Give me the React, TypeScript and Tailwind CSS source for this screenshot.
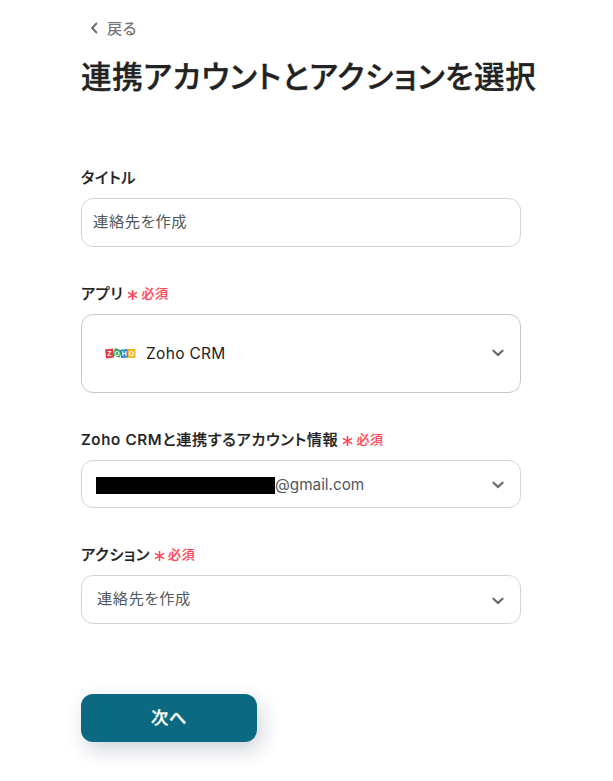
import type { ReactNode } from 'react'

const text = 'text-[#50575d]'

function Chevron({ className = '' }: { className?: string }) {
  return (
    <svg width="14" height="8" viewBox="0 0 14 8" fill="none" className={`shrink-0 ${className}`}>
      <path d="M2.4 1.7 7 5.9 11.6 1.7" stroke="#6c6c6c" strokeWidth="2.2" strokeLinecap="round" />
    </svg>
  )
}

function ZohoLogo() {
  return (
    <svg width="32" height="12" viewBox="0 0 32 12" fontFamily="Liberation Sans, sans-serif" fontSize="7" fontWeight="700" fill="#fff" textAnchor="middle" className="mb-px [font-feature-settings:normal] tracking-normal">
      <rect x="0.5" y="2" width="8" height="9" fill="#e13a3e" transform="rotate(-6 4.5 6)" />
      <text x="4.5" y="9">Z</text>
      <rect x="8.5" y="2" width="7.5" height="7.5" fill="#36a852" transform="rotate(22 12 6)" />
      <text x="12" y="8.6">O</text>
      <rect x="15.5" y="2.4" width="7.5" height="8.4" fill="#2d83c5" transform="rotate(-5 19 6)" />
      <text x="19.2" y="9">H</text>
      <rect x="22.7" y="2" width="7.8" height="8.8" fill="#f2b51d" />
      <text x="26.6" y="8.8">O</text>
    </svg>
  )
}

function Label({ children, required }: { children: ReactNode; required?: boolean }) {
  return (
    <div className="flex h-5 items-center text-[15.2px] leading-5 font-medium whitespace-nowrap text-[#222]">
      <span className="pt-px [-webkit-text-stroke:0.2px_#222]">{children}</span>
      {required && (
        <span className="ml-[4px] flex items-center gap-[3px] text-[13px] font-medium text-[#ff4757]">
          <svg width="11" height="12" viewBox="0 0 11 12" fill="none" className="mt-[3px]">
            <path d="M5.5 1v10M1 3.4l9 5.2M10 3.4 1 8.6" stroke="#ff4757" strokeWidth="1.6" />
          </svg>
          <span className="[-webkit-text-stroke:0.15px_#ff4757]">必須</span>
        </span>
      )}
    </div>
  )
}

export default function App() {
  return (
    <div className="min-h-[781px] bg-white pl-[81px] font-['Inter','Noto_Sans_CJK_JP',sans-serif] tracking-[0.04em] [font-feature-settings:'palt']">
      <button className="mt-[18px] flex h-5 items-center gap-[9px] pl-[9px] text-[15.2px] font-medium text-[#777]">
        <svg width="8" height="12" viewBox="0 0 8 12" fill="none">
          <path d="M6.3 1.6 2.2 6l4.1 4.4" stroke="#6c6c6c" strokeWidth="2.1" strokeLinecap="round" />
        </svg>
        <span className="pt-[2px]">戻る</span>
      </button>
      <h1 className="mt-[19px] h-10 text-[30.6px] leading-10 font-medium whitespace-nowrap text-[#222] [-webkit-text-stroke:0.35px_#222]">連携アカウントとアクションを選択</h1>

      {/* Form */}
      <form className="mt-[70px] w-[440px]">
        <Label>タイトル</Label>
        <input className={`mt-[11px] block h-[49px] w-full rounded-[12px] border border-[#d1d5db] px-[11px] pb-[5px] text-[15.3px] leading-5 tracking-[0.04em] outline-none ${text}`} defaultValue="連絡先を作成" />

        <div className="mt-9">
          <Label required>アプリ</Label>
          <div className="mt-[11px] flex h-[79px] items-center rounded-[12px] border border-[#c8c8c8] pr-[15px] pl-[23px] text-[15.5px] text-[#222]">
            <ZohoLogo />
            <span className="ml-[9px] flex-1 pt-px tracking-[0.02em]">Zoho CRM</span>
            <Chevron className="mb-[2px]" />
          </div>
        </div>

        <div className="mt-9">
          <Label required>Zoho CRMと連携するアカウント情報</Label>
          <div className={`mt-[11px] flex h-12 items-center rounded-[12px] border border-[#d1d5db] pr-[15px] pl-[14px] text-[15.3px] ${text}`}>
            <span className="mt-[3px] h-[17px] w-[179px] bg-black" />
            <span className="flex-1 pt-[2px] tracking-normal">@gmail.com</span>
            <Chevron className="mt-[2px]" />
          </div>
        </div>

        <div className="mt-9">
          <Label required>アクション</Label>
          <div className={`mt-[11px] flex h-[49px] items-center rounded-[12px] border border-[#d1d5db] pr-[15px] pl-[15px] text-[15.2px] ${text}`}>
            <span className="flex-1">連絡先を作成</span>
            <Chevron className="mt-[2px]" />
          </div>
        </div>

        <button type="button" className="mt-[70px] h-12 w-44 rounded-[12px] bg-[#0b6981] pb-px text-[17.2px] font-medium text-white shadow-[4px_8px_20px_rgba(40,60,90,0.22)] [-webkit-text-stroke:0.4px_white]">
          次へ
        </button>
      </form>
    </div>
  )
}
